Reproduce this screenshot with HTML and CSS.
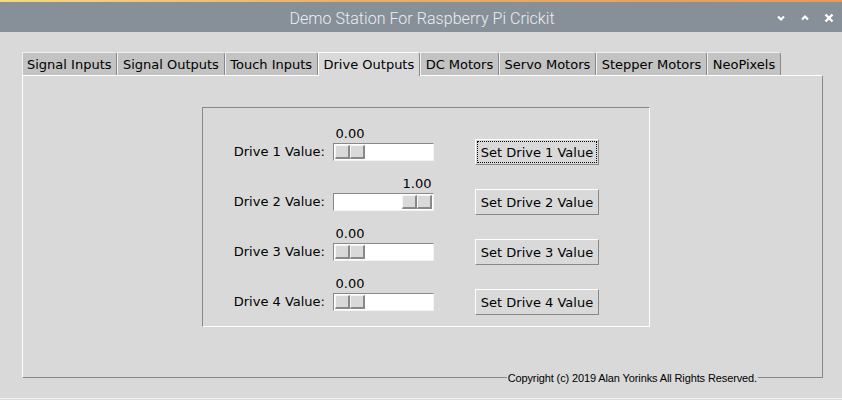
FILE: index.html
```html
<!DOCTYPE html>
<html>
<head>
<meta charset="utf-8">
<link rel="stylesheet" href="styles.css">
</head>
<body>
<div class="window">
  <div class="titlebar">
    <div class="title">Demo Station For Raspberry Pi Crickit</div>
    <div class="controls">
      <svg width="10" height="8" viewBox="0 0 10 8"><path d="M2 2.5 L5 5.5 L8 2.5" fill="none" stroke="#fff" stroke-width="2.2"/></svg>
      <svg width="10" height="8" viewBox="0 0 10 8"><path d="M2 5.5 L5 2.5 L8 5.5" fill="none" stroke="#fff" stroke-width="2.2"/></svg>
      <svg width="10" height="10" viewBox="0 0 10 10"><path d="M1.5 1.5 L8.5 8.5 M8.5 1.5 L1.5 8.5" fill="none" stroke="#fff" stroke-width="2.4"/></svg>
    </div>
  </div>
  <div class="content">
    <div class="notebook">
      <div class="tabs">
        <div class="tab">Signal Inputs</div>
        <div class="tab">Signal Outputs</div>
        <div class="tab">Touch Inputs</div>
        <div class="tab selected">Drive Outputs</div>
        <div class="tab">DC Motors</div>
        <div class="tab">Servo Motors</div>
        <div class="tab">Stepper Motors</div>
        <div class="tab">NeoPixels</div>
      </div>
      <div class="panel">
        <div class="frame">
          <div class="row">
            <div class="label">Drive 1 Value:</div>
            <div class="scale" style="--v:0">
              <div class="value-line"><span class="value">0.00</span></div>
              <div class="trough"><div class="thumb"><span></span><span></span></div></div>
            </div>
            <button class="btn focus"><span>Set Drive 1 Value</span></button>
          </div>
          <div class="row">
            <div class="label">Drive 2 Value:</div>
            <div class="scale" style="--v:1">
              <div class="value-line"><span class="value">1.00</span></div>
              <div class="trough"><div class="thumb"><span></span><span></span></div></div>
            </div>
            <button class="btn"><span>Set Drive 2 Value</span></button>
          </div>
          <div class="row">
            <div class="label">Drive 3 Value:</div>
            <div class="scale" style="--v:0">
              <div class="value-line"><span class="value">0.00</span></div>
              <div class="trough"><div class="thumb"><span></span><span></span></div></div>
            </div>
            <button class="btn"><span>Set Drive 3 Value</span></button>
          </div>
          <div class="row">
            <div class="label">Drive 4 Value:</div>
            <div class="scale" style="--v:0">
              <div class="value-line"><span class="value">0.00</span></div>
              <div class="trough"><div class="thumb"><span></span><span></span></div></div>
            </div>
            <button class="btn"><span>Set Drive 4 Value</span></button>
          </div>
        </div>
        <div class="copyright">Copyright (c) 2019 Alan Yorinks All Rights Reserved.</div>
      </div>
    </div>
  </div>
</div>
</body>
</html>
```

FILE: styles.css
```css
* { box-sizing: border-box; }
html, body { margin: 0; padding: 0; }
body {
  width: 842px;
  height: 400px;
  overflow: hidden;
  background: #d9d9d9;
  font-family: "DejaVu Sans", sans-serif;
  font-size: 13px;
  color: #000;
}
.window { width: 842px; height: 400px; display: flex; flex-direction: column; }
.titlebar {
  height: 32px;
  flex: none;
  background: #878f99;
  border-image: linear-gradient(to right, #f6d981, #eab067 40%, #e59a55) 1;
  border-width: 2px 0 0 0;
  border-style: solid;
  display: flex;
  align-items: center;
  justify-content: center;
  position: relative;
}
.title {
  font-family: Roboto, "Liberation Sans", sans-serif;
  font-weight: 300;
  font-size: 16px;
  color: #eceef0;
  letter-spacing: 0.05px;
  margin-left: 2px;
  padding-top: 2px;
}
.controls {
  position: absolute;
  right: 8px;
  top: 11px;
  display: flex;
  gap: 14px;
  align-items: center;
}
.controls svg { display: block; }
.content {
  flex: 1;
  padding: 20px 0 0 22px;
  border-bottom: 1px solid #f4f4f4;
  margin-bottom: 1px;
}
.notebook { width: 801px; }
.tabs { display: flex; height: 23px; align-items: flex-end; }
.tab {
  height: 23px;
  line-height: 22px;
  padding: 1px 4.7px 0 4.7px;
  background: #c3c3c3;
  border-top: 1px solid #f0f0f0;
  border-left: 1px solid #f0f0f0;
  border-right: 1px solid #888;
  border-top-right-radius: 3px;
  white-space: nowrap;
}
.tab:first-child { padding-left: 4px; }
.tab.selected {
  background: #d9d9d9;
  height: 24px;
  margin-bottom: -1px;
  position: relative;
  z-index: 1;
  border-top-color: #fff;
  border-left-color: #fff;
}
.panel {
  position: relative;
  height: 303px;
  border-top: 1px solid #fff;
  border-left: 1px solid #fff;
  border-right: 1px solid #888;
  border-bottom: 1px solid #888;
  padding: 31px 0 0 179px;
}
.frame {
  width: 448px;
  height: 220px;
  border-top: 1px solid #888;
  border-left: 1px solid #888;
  border-right: 1px solid #fff;
  border-bottom: 1px solid #fff;
  padding: 16px 0 0 0;
  display: flex;
  flex-direction: column;
  gap: 9px;
}
.row {
  display: grid;
  grid-template-columns: 122px 101px 124px;
  column-gap: 8px;
  align-items: end;
}
.row .btn { margin-left: 33px; }
.label {
  text-align: right;
  height: 26px;
  line-height: 26px;
}
.scale { display: flex; flex-direction: column; }
.value-line {
  height: 17px;
  line-height: 15px;
  padding: 2px 2px 0 2px;
  margin-bottom: 2px;
}
.value {
  display: block;
  width: 30px;
  text-align: center;
  margin-left: calc(var(--v) * 67px);
}
.trough {
  height: 18px;
  background: #fff;
  border-top: 1px solid #888;
  border-left: 1px solid #888;
  border-right: 1px solid #f4f4f4;
  border-bottom: 1px solid #f4f4f4;
  padding: 1px;
  margin-bottom: 4px;
}
.thumb {
  display: flex;
  width: 30px;
  height: 14px;
  margin-left: calc(var(--v) * 67px);
}
.thumb span {
  width: 15px;
  height: 14px;
  background: #d9d9d9;
  border-top: 1px solid #f4f4f4;
  border-left: 1px solid #f4f4f4;
  border-right: 2px solid #888;
  border-bottom: 2px solid #888;
}
.btn {
  font-family: "DejaVu Sans", sans-serif;
  font-size: 13px;
  color: #000;
  width: 124px;
  height: 26px;
  padding: 1px;
  background: #d9d9d9;
  border-top: 1px solid #fff;
  border-left: 1px solid #fff;
  border-right: 1px solid #888;
  border-bottom: 1px solid #888;
  display: flex;
  align-items: stretch;
  justify-content: stretch;
}
.btn span {
  flex: 1;
  display: flex;
  align-items: center;
  justify-content: center;
  border: 1px dotted transparent;
}
.btn.focus span { border-color: #000; }
.copyright {
  position: absolute;
  right: 64px;
  bottom: -8px;
  font-family: "Liberation Sans", Arial, sans-serif;
  font-size: 11px;
  letter-spacing: -0.12px;
  line-height: 14px;
  padding: 0 1px;
  background: #d9d9d9;
  color: #000;
}
```
